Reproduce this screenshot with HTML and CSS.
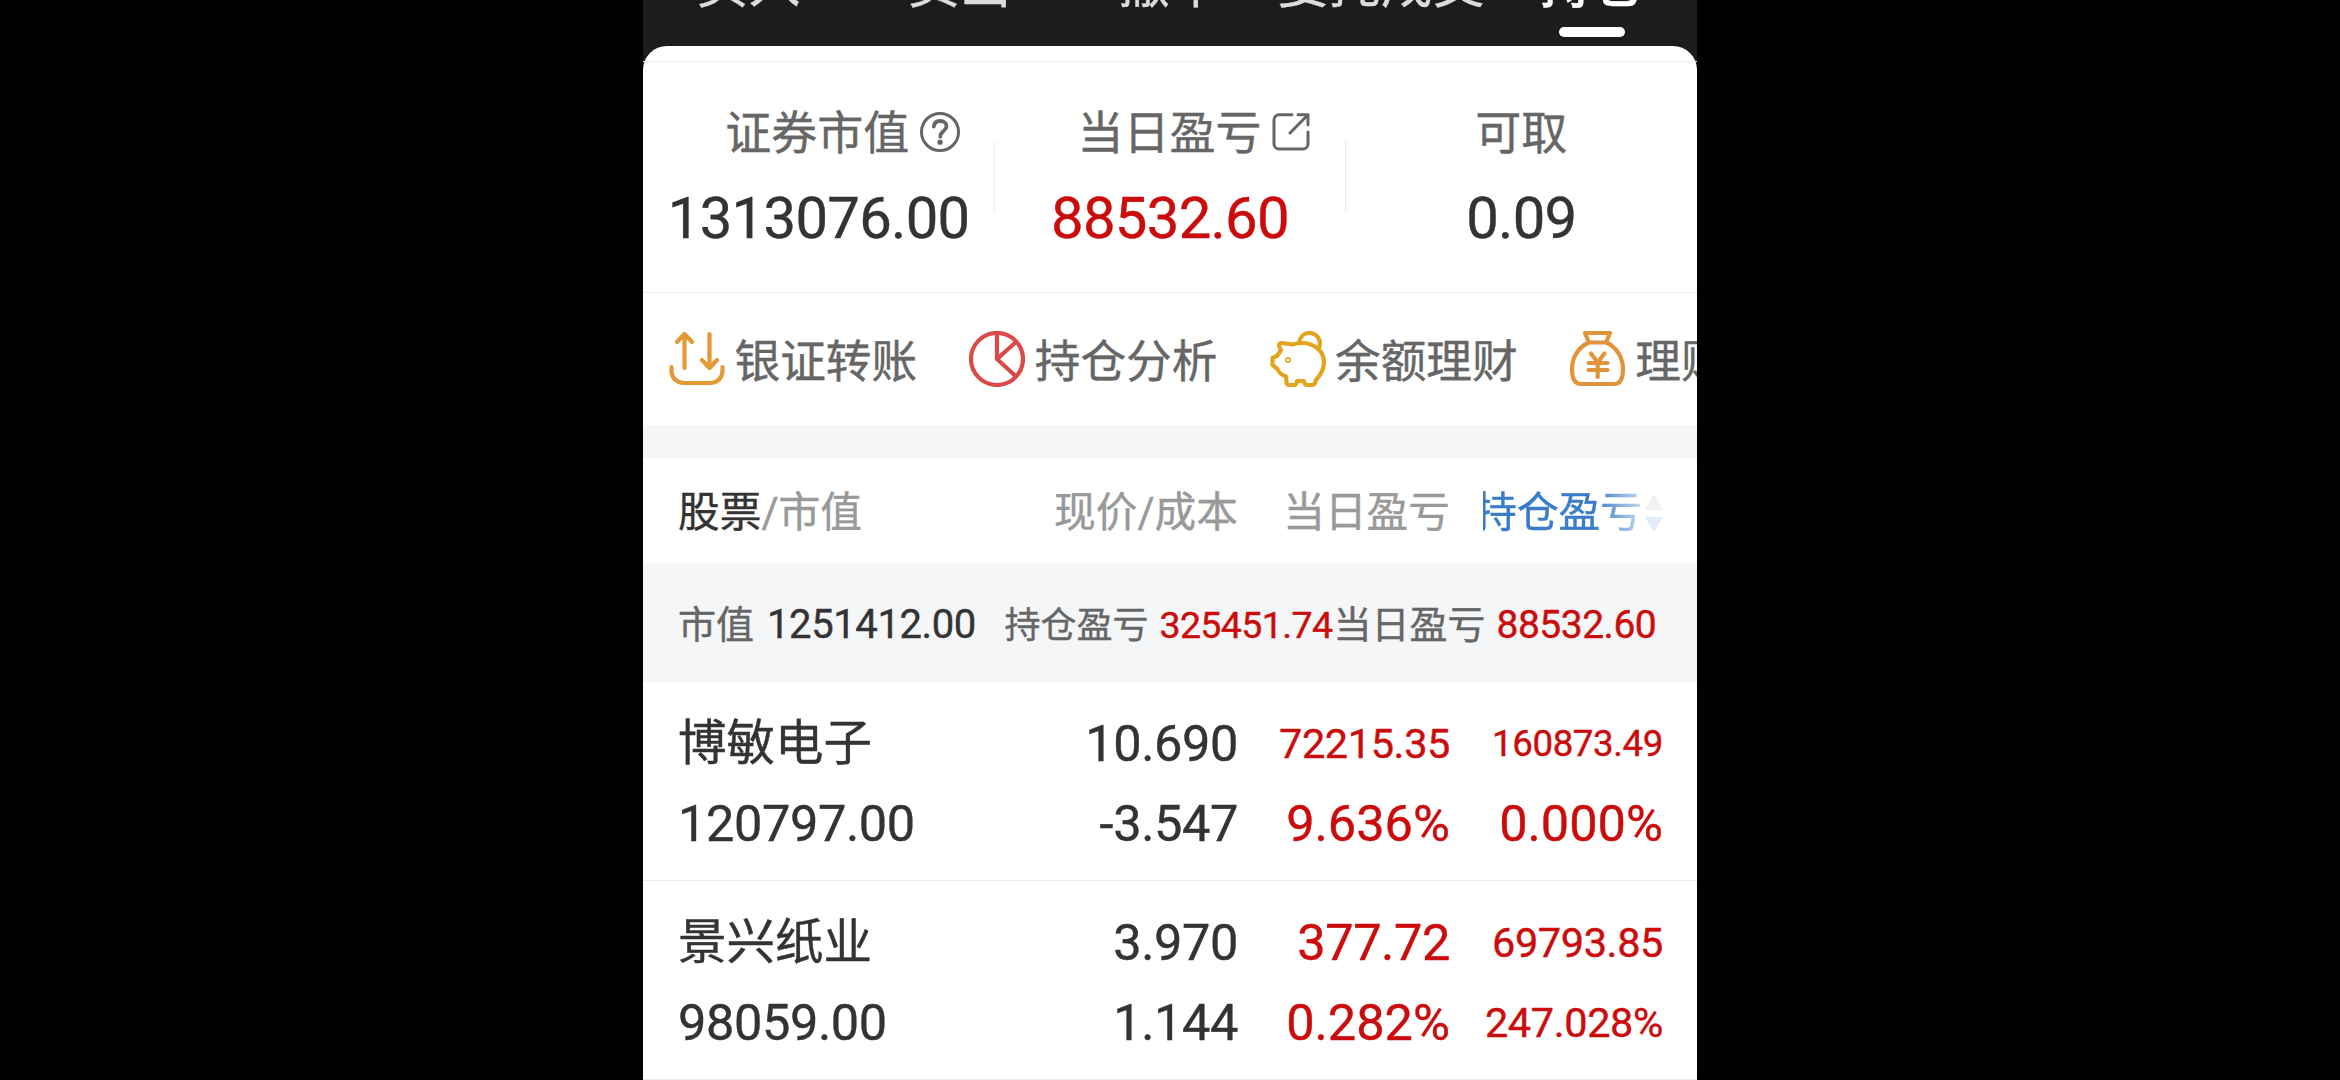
FILE: index.html
```html
<!DOCTYPE html>
<html lang="zh-CN">
<head>
  <meta charset="UTF-8" />
  <meta name="viewport" content="width=device-width, initial-scale=1.0"/>
  <title>持仓</title>
  <link rel="stylesheet" href="styles.css">
</head>
<body>

  <main class="phone">

    <nav class="tabs">
      <a class="tab">买入</a>
      <a class="tab">卖出</a>
      <a class="tab">撤单</a>
      <a class="tab">委托成交</a>
      <a class="tab active">持仓</a>
    </nav>

    <div class="card">
      <section class="totals">
        <div class="total">
          <div class="total-label"><span>证券市值</span>
            <svg class="icon-help" viewBox="0 0 40 40">
              <circle cx="20" cy="20" r="18.5"/>
              <path class="mark" d="M13.800 14.500c.4-4 3-5.500 6.400-5.500 3.700 0 6.300 2 6.300 5.200 0 4.800-6.200 5.200-6.200 10.300"/>
              <circle class="dot" cx="20.100" cy="30.200" r="2.600"/>
            </svg>
          </div>
          <div class="total-value">1313076.00</div>
        </div>
        <div class="total">
          <div class="total-label"><span>当日盈亏</span>
            <svg class="icon-open" viewBox="0 0 38 38">
              <path d="M20 1.800H7a5 5 0 0 0-5 5V31a5 5 0 0 0 5 5h24a5 5 0 0 0 5-5V19M26 1.800h10v10M36 1.800L18 20"/>
            </svg>
          </div>
          <div class="total-value up">88532.60</div>
        </div>
        <div class="total">
          <div class="total-label plain"><span>可取</span></div>
          <div class="total-value">0.09</div>
        </div>
      </section>

      <section class="shortcuts">
        <a class="shortcut">
          <svg viewBox="0 0 56 56" stroke="#e39a35">
            <path d="M2.500 36v4a12 12 0 0 0 12 12h27a12 12 0 0 0 12-12v-4M15.500 37V3M8 11l7.500-8 7.500 8M40.500 3v34M33 29l7.500 8 7.500-8"/>
          </svg>
          <span>银证转账</span>
        </a>
        <a class="shortcut">
          <svg viewBox="0 0 56 56" stroke="#dc4a48">
            <circle cx="28" cy="28" r="26"/>
            <path d="M28 2v26l18.500 17M28 28l19-17"/>
          </svg>
          <span>持仓分析</span>
        </a>
        <a class="shortcut">
          <svg viewBox="0 0 56 56" stroke="#e3a51d">
            <path d="M9 14.500Q9 12 12 12l10 1.500q5-1.500 10-1.500C44 12 54 20 54 31c0 8-4 13-8 18l-1 3q-1 2-3 2h-5q-2 0-2.500-2l-.5-2h-7l-.5 2q-.5 2-2.500 2h-5q-2 0-2.500-2L16 45.500Q9 43 7.500 38L2.500 34v-7L7 25l4-6z"/>
            <path d="M29 12c1-6 5-10 10-10 8 0 13 7 10 15"/>
            <circle cx="18" cy="29" r=".8"/>
          </svg>
          <span>余额理财</span>
        </a>
        <a class="shortcut">
          <svg viewBox="0 0 56 56" stroke="#e0943c">
            <path d="M15 2h25l-4 9.500H19zM19 11.500C8 16 2 27 2 38c0 10 3 15 9 15h33c6 0 9-5 9-15 0-11-6-22-17-26.500"/>
            <path d="M21 22.500l6.700 9 6.700-9M27.700 32v14M18.500 32h19M18.500 39h19"/>
          </svg>
          <span>理财</span>
        </a>
      </section>

      <section class="table-head">
        <div><b>股票</b>/市值</div>
        <div>现价/成本</div>
        <div>当日盈亏</div>
        <div class="sorted"><span>持仓盈亏</span>
          <svg viewBox="0 0 18 38"><path d="M9 0l9 16H0z" fill="#c8c8c8"/><path d="M0 23h18L9 38z" fill="#8fb8e6"/></svg>
        </div>
      </section>

      <section class="summary">
        <span class="sum-a">市值</span><span class="sum-a-num">1251412.00</span>
        <span class="sum-b">持仓盈亏</span><span class="sum-b-num up">325451.74</span>
        <span class="sum-c">当日盈亏</span><span class="sum-c-num up">88532.60</span>
      </section>

      <section class="stock">
        <div class="name">博敏电子</div>
        <div>10.690</div>
        <div class="up medium">72215.35</div>
        <div class="up small">160873.49</div>
        <div>120797.00</div>
        <div>-3.547</div>
        <div class="up rate">9.636%</div>
        <div class="up rate">0.000%</div>
      </section>

      <section class="stock">
        <div class="name">景兴纸业</div>
        <div>3.970</div>
        <div class="up">377.72</div>
        <div class="up medium">69793.85</div>
        <div>98059.00</div>
        <div>1.144</div>
        <div class="up rate">0.282%</div>
        <div class="up medium">247.028%</div>
      </section>
    </div>

  </main>

</body>
</html>
```
FILE: styles.css
```css
:root {
  --text: #333333;
  --label: #666666;
  --muted: #999999;
  --up: #cb0c0c;
  --blue: #3a7cc9;
  --line: #ececec;
  --band: #f5f6f8;
  --bar: #1b1c1e;
}

* {
  box-sizing: border-box;
}

body {
  margin: 0;
  background-color: #000;
  color: var(--text);
  font-family: Roboto, 'Noto Sans CJK SC', sans-serif;
  -webkit-text-stroke: 0.4px currentColor;
}

svg {
  display: block;
  flex: none;
  fill: none;
  stroke-linecap: round;
  stroke-linejoin: round;
}

.phone {
  width: 1054px;
  height: 1080px;
  margin: 0 auto;
  overflow: hidden;
  background-color: var(--bar);
}

/* Tabs, scrolled half out at the top */
.tabs {
  display: grid;
  grid-template-columns: repeat(5, 1fr);
  height: 90px;
  margin-top: -44px;
}

.tab {
  display: flex;
  flex-direction: column;
  align-items: center;
  font-size: 52px;
  line-height: 60px;
  white-space: nowrap;
  color: #dcdcdc;
}

.tab.active {
  color: #fff;
  font-weight: 500;
}

.tab.active::after {
  content: '';
  width: 66px;
  height: 10px;
  margin-top: 11px;
  border-radius: 5px;
  background-color: #fff;
}

.card {
  height: 1034px;
  padding-top: 15px;
  border-radius: 24px 24px 0 0;
  background-color: #fff;
}

/* Totals */
.totals {
  display: grid;
  grid-template-columns: repeat(3, 1fr);
  height: 232px;
  border-top: 1px solid var(--line);
  border-bottom: 1px solid var(--line);
  background-image: linear-gradient(var(--line), var(--line)), linear-gradient(var(--line), var(--line));
  background-size: 1px 72px;
  background-position: 351px 79px, 702px 79px;
  background-repeat: no-repeat;
}

.total {
  padding-top: 40px;
  text-align: center;
}

.total-label {
  display: flex;
  justify-content: center;
  align-items: center;
  gap: 11px;
  height: 60px;
  padding-left: 48px;
  font-size: 46px;
  color: var(--label);
}

.total-label span {
  margin-top: -7px;
}

.total-label.plain {
  padding-left: 0;
}

.icon-help,
.icon-open {
  width: 40px;
  height: 40px;
  stroke: var(--label);
  stroke-width: 3;
}

.icon-open {
  width: 38px;
  height: 38px;
}

.icon-help .mark {
  stroke-width: 3.8;
}

.icon-help .dot {
  fill: var(--label);
  stroke: none;
}

.total-value {
  margin-top: 20px;
  font-size: 58px;
  line-height: 72px;
  letter-spacing: -0.7px;
}

.up {
  color: var(--up);
}

/* Shortcuts */
.shortcuts {
  display: flex;
  gap: 52px;
  height: 132px;
  padding-left: 26px;
  overflow: hidden;
}

.shortcut {
  display: flex;
  flex: none;
  align-items: center;
  gap: 9.5px;
  font-size: 45.7px;
  color: var(--label);
}

.shortcut span {
  margin-top: -3px;
}

.shortcut svg {
  width: 56px;
  height: 56px;
  stroke-width: 4.2;
}

/* Positions */
.table-head,
.stock {
  display: grid;
  grid-template-columns: 1fr 212px 212px 213px;
  padding: 0 34px 0 35px;
  text-align: right;
  white-space: nowrap;
}

.table-head {
  height: 138px;
  border-top: 33px solid var(--band);
  font-size: 41.7px;
  line-height: 109px;
  color: var(--muted);
}

.table-head div:first-child {
  text-align: left;
}

.table-head b {
  font-weight: 400;
  color: var(--text);
}

.table-head .sorted {
  display: flex;
  justify-content: flex-end;
  gap: 3px;
  height: 105px;
  margin-left: 33px;
  overflow: hidden;
  color: var(--blue);
  mask-image: linear-gradient(to right, #000 62%, rgba(0, 0, 0, 0.3) 88%, rgba(0, 0, 0, 0.22) 100%);
}

.sorted svg {
  width: 18px;
  height: 38px;
  margin-top: 36px;
}

.summary {
  display: flex;
  align-items: baseline;
  height: 119px;
  padding-left: 35px;
  background-color: var(--band);
  line-height: 123px;
  white-space: nowrap;
  color: var(--label);
}

.sum-a {
  font-size: 38px;
}

.sum-a-num {
  margin: 0 28.5px 0 13px;
  font-size: 40px;
  letter-spacing: -0.4px;
  color: var(--text);
}

.sum-b {
  font-size: 36px;
}

.sum-b-num {
  margin-left: 11px;
  font-size: 37.5px;
  letter-spacing: -0.6px;
}

.sum-c {
  margin-left: 1px;
  font-size: 38px;
}

.sum-c-num {
  margin-left: 11px;
  font-size: 39px;
  letter-spacing: -0.5px;
}

.summary .up {
  color: var(--up);
}

.stock {
  height: 199px;
  padding-top: 22px;
  grid-template-rows: 80px 80px;
  border-bottom: 1px solid var(--line);
  font-size: 50.5px;
  line-height: 80px;
  letter-spacing: -0.4px;
}

.stock div:nth-child(4n + 1) {
  text-align: left;
}

.stock .name {
  font-size: 48.5px;
  letter-spacing: 0;
}

.stock .rate {
  letter-spacing: 0;
}

.stock .medium {
  font-size: 41.5px;
}

.stock .small {
  font-size: 36.7px;
}
```
